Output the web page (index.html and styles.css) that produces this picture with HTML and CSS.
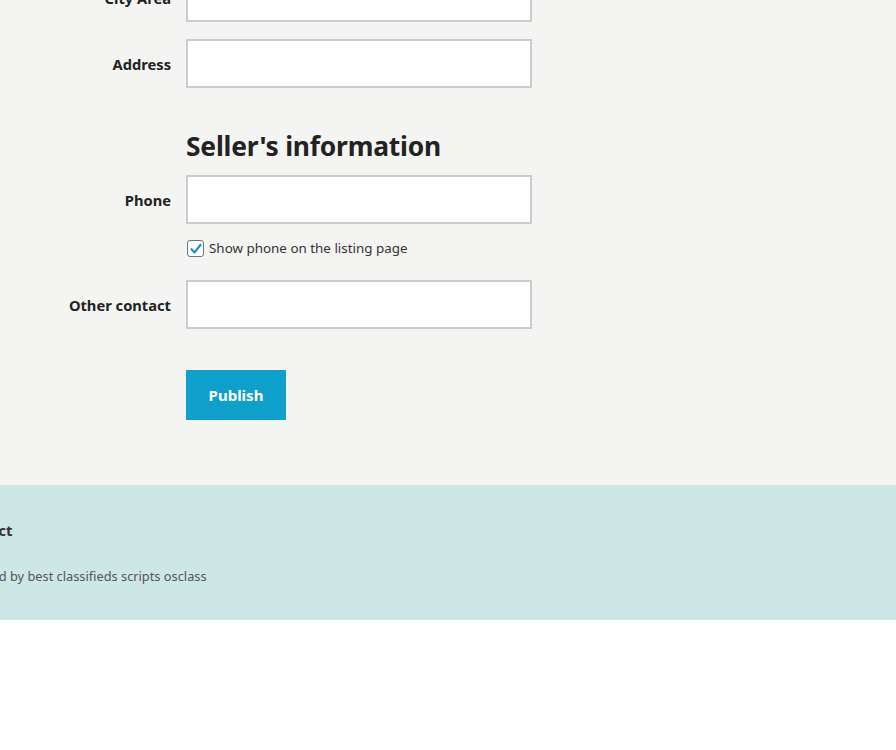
FILE: index.html
```html
<!DOCTYPE html>
<html>
<head>
<meta charset="utf-8">
<link rel="stylesheet" href="styles.css">
</head>
<body>
<main class="content">
  <form class="form">
    <div class="row">
      <label class="label">City Area</label>
      <input class="field" type="text">
    </div>
    <div class="row row-gap">
      <label class="label">Address</label>
      <input class="field" type="text">
    </div>
    <div class="row heading-row">
      <span class="label"></span>
      <h2 class="heading">Seller's information</h2>
    </div>
    <div class="row">
      <label class="label">Phone</label>
      <input class="field" type="text">
    </div>
    <div class="row check-row">
      <span class="label"></span>
      <label class="check">
        <span class="box"><svg width="14" height="14" viewBox="0 0 14 14"><path d="M2.5 7.2 L5.6 10.4 L11.6 2.8" fill="none" stroke="#1a8fd0" stroke-width="2.2" stroke-linecap="round" stroke-linejoin="round"/></svg></span>
        <span class="check-text">Show phone on the listing page</span>
      </label>
    </div>
    <div class="row other-row">
      <label class="label">Other contact</label>
      <input class="field" type="text">
    </div>
    <div class="row button-row">
      <span class="label"></span>
      <button class="publish" type="button">Publish</button>
    </div>
  </form>
</main>
<footer class="footer">
  <div class="footer-inner">
    <div class="footer-title">Contact</div>
    <div class="footer-text">Powered by best classifieds scripts osclass</div>
  </div>
</footer>
</body>
</html>
```

FILE: styles.css
```css
* { box-sizing: border-box; }
html, body { margin: 0; padding: 0; background: #ffffff; }
body {
  font-family: "Noto Sans", "Open Sans", sans-serif;
  color: #222222;
  overflow: hidden;
}
.content {
  background: #f4f4f2;
  padding-bottom: 65px;
  overflow: hidden;
}
.form {
  display: flex;
  flex-direction: column;
  margin-top: -27px;
}
.row {
  display: flex;
  align-items: center;
  gap: 15px;
}
.row-gap { margin-top: 17px; }
.label {
  width: 171px;
  flex: none;
  text-align: right;
  font-size: 14.7px;
  font-weight: 700;
  color: #222222;
}
.field {
  width: 346px;
  height: 49px;
  border: 2px solid #cccccc;
  background: #ffffff;
  border-radius: 0;
  margin: 0;
  padding: 0 10px;
  font-family: inherit;
  font-size: 15px;
}
.heading-row { margin-top: 41px; margin-bottom: 12px; }
.heading {
  margin: 0;
  font-size: 26.4px;
  line-height: 34px;
  font-weight: 700;
  color: #222222;
  letter-spacing: -0.2px;
}
.check-row { margin-top: 16px; }
.check {
  display: flex;
  align-items: center;
  gap: 5px;
  margin-left: 1px;
}
.box {
  width: 17px;
  height: 17px;
  border: 1.5px solid #6a7685;
  border-radius: 3px;
  background: #ffffff;
  display: flex;
  align-items: center;
  justify-content: center;
}
.check-text {
  font-size: 13.4px;
  line-height: 17px;
  color: #333333;
}
.other-row { margin-top: 23px; }
.button-row { margin-top: 41px; }
.publish {
  width: 100px;
  height: 50px;
  border: none;
  background: #0e9fcb;
  color: #ffffff;
  font-family: inherit;
  font-size: 15px;
  font-weight: 700;
  padding: 0;
  margin: 0;
}
.footer {
  background: #cde7e7;
  height: 135px;
  overflow: hidden;
}
.footer-inner {
  margin-left: -46px;
  padding-top: 34px;
  display: flex;
  flex-direction: column;
}
.footer-title {
  font-size: 15px;
  font-weight: 700;
  line-height: 22px;
  color: #333333;
}
.footer-text {
  margin-top: 26px;
  font-size: 12.8px;
  line-height: 18px;
  color: #555555;
}
```
